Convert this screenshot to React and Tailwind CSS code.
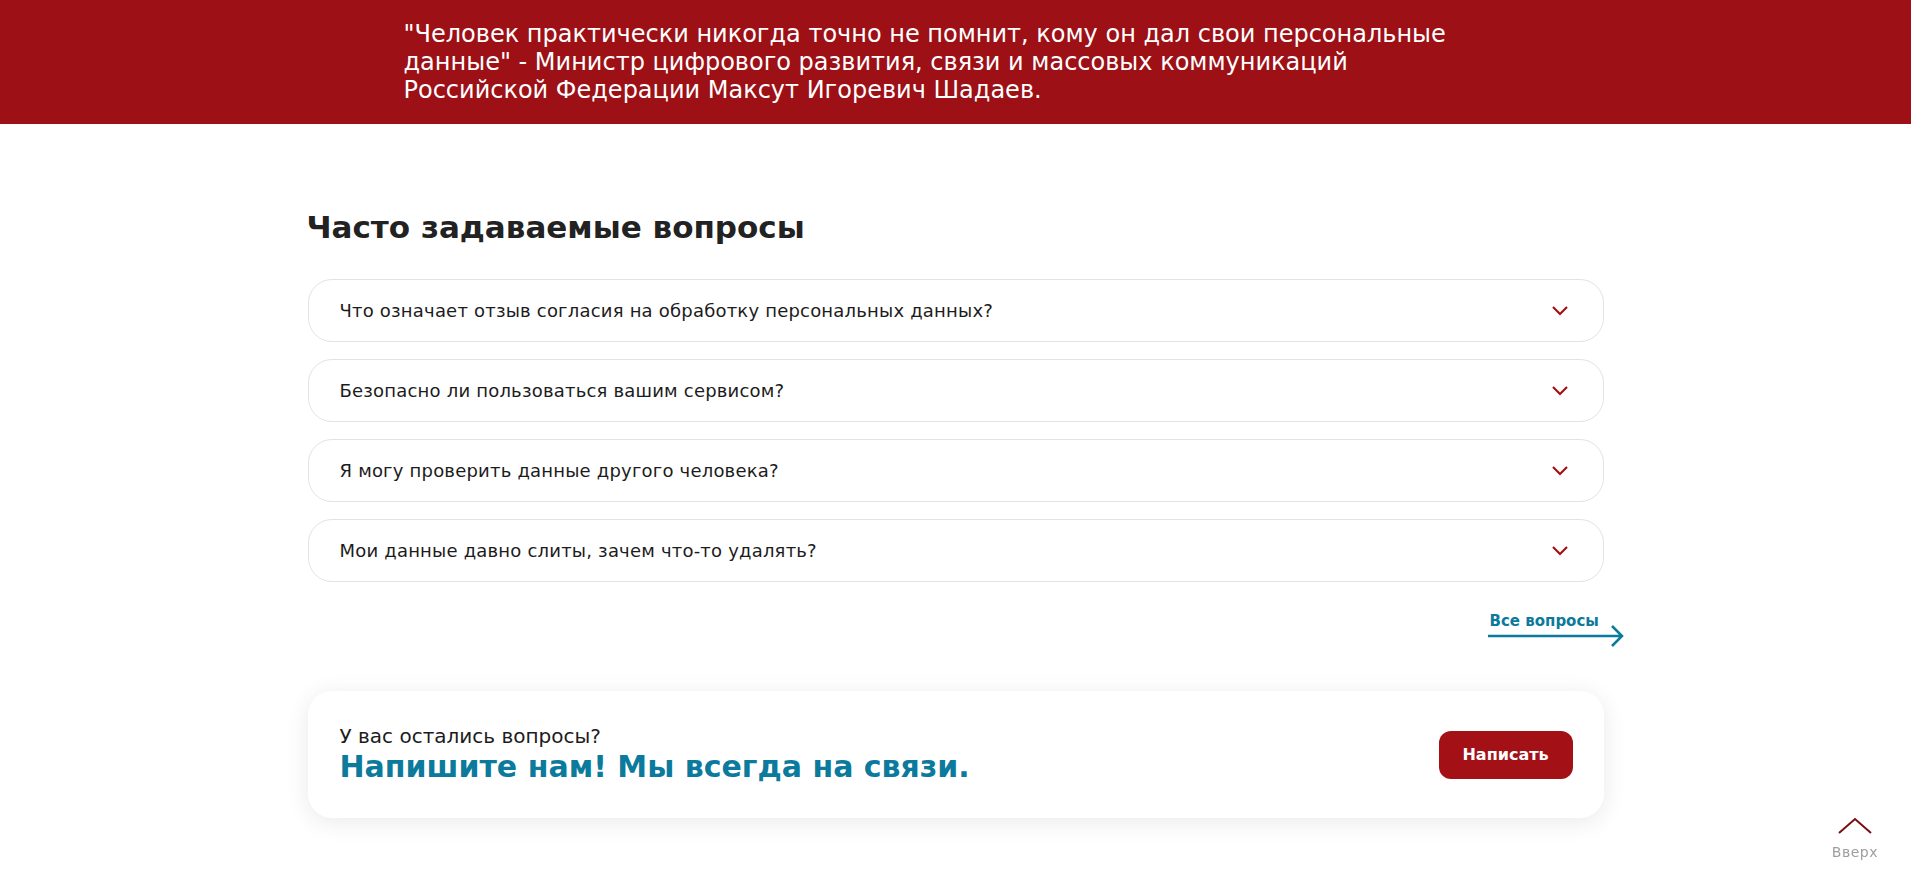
const questions = [
  'Что означает отзыв согласия на обработку персональных данных?',
  'Безопасно ли пользоваться вашим сервисом?',
  'Я могу проверить данные другого человека?',
  'Мои данные давно слиты, зачем что-то удалять?',
]

function Chevron() {
  return (
    <svg width="18" height="12" viewBox="0 0 18 12" fill="none">
      <path d="M2 2l7 7 7-7" stroke="#a31016" strokeWidth="2.2" />
    </svg>
  )
}

function FaqItem({ text }) {
  return (
    <div className="flex h-[63px] items-center justify-between rounded-[24px] border border-[#e3e3e3] bg-white pl-[31px] pr-[34px]">
      <span className="text-[18px] tracking-[0.2px] text-[#1c1c1c]">{text}</span>
      <Chevron />
    </div>
  )
}

export default function App() {
  return (
    <div className="min-h-[893px] bg-white font-['DejaVu_Sans',sans-serif]">
      <div className="bg-[#9c1016] pt-[20px] pb-[20px]">
        <p className="mx-auto w-[1104px] text-[24px] leading-[28px] text-white">
          <span className="block w-[1060px]">
            "Человек практически никогда точно не помнит, кому он дал свои персональные данные" - Министр цифрового развития, связи и массовых коммуникаций Российской Федерации Максут Игоревич Шадаев.
          </span>
        </p>
      </div>

      <div className="mx-auto w-[1296px] pt-[85px]">
        <h2 className="-ml-[1px] text-[31px] font-bold leading-[36px] text-[#222]">Часто задаваемые вопросы</h2>

        <div className="mt-[34px] flex flex-col gap-[17px]">
          {questions.map((q) => (
            <FaqItem key={q} text={q} />
          ))}
        </div>

        <div className="mt-[29px] flex justify-end">
          <a href="#" className="relative mr-[-21px] flex h-[36px] w-[137px] flex-col">
            <span className="pl-[2px] text-[15px] font-semibold leading-[20px] text-[#0b7a9c]">Все вопросы</span>
            <svg className="absolute left-0 top-[13px]" width="137" height="24" viewBox="0 0 137 24" fill="none">
              <path d="M0 12h133M124 2l10 10-10 10" stroke="#0b7a9c" strokeWidth="2.5" />
            </svg>
          </a>
        </div>

        <div className="mt-[44px] flex h-[127px] items-center justify-between rounded-[24px] bg-white pl-[32px] pr-[31px] shadow-[0_4px_24px_rgba(0,0,0,0.09)]">
          <div className="flex flex-col">
            <span className="text-[20px] leading-[25px] text-[#1c1c1c]">У вас остались вопросы?</span>
            <span className="text-[30px] font-bold leading-[36px] text-[#0b7a9c]">Напишите нам! Мы всегда на связи.</span>
          </div>
          <button className="h-[48px] w-[134px] rounded-[12px] bg-[#a31016] text-[16px] font-bold text-white">
            Написать
          </button>
        </div>
      </div>

      <a href="#" className="fixed bottom-[30px] right-[33px] flex flex-col items-center">
        <svg width="34" height="17" viewBox="0 0 34 17" fill="none">
          <path d="M1 16L17 2l16 14" stroke="#7a0d10" strokeWidth="2" />
        </svg>
        <span className="mt-[8px] text-[14px] tracking-[0.5px] text-[#9e9e9e]">Вверх</span>
      </a>
    </div>
  )
}
